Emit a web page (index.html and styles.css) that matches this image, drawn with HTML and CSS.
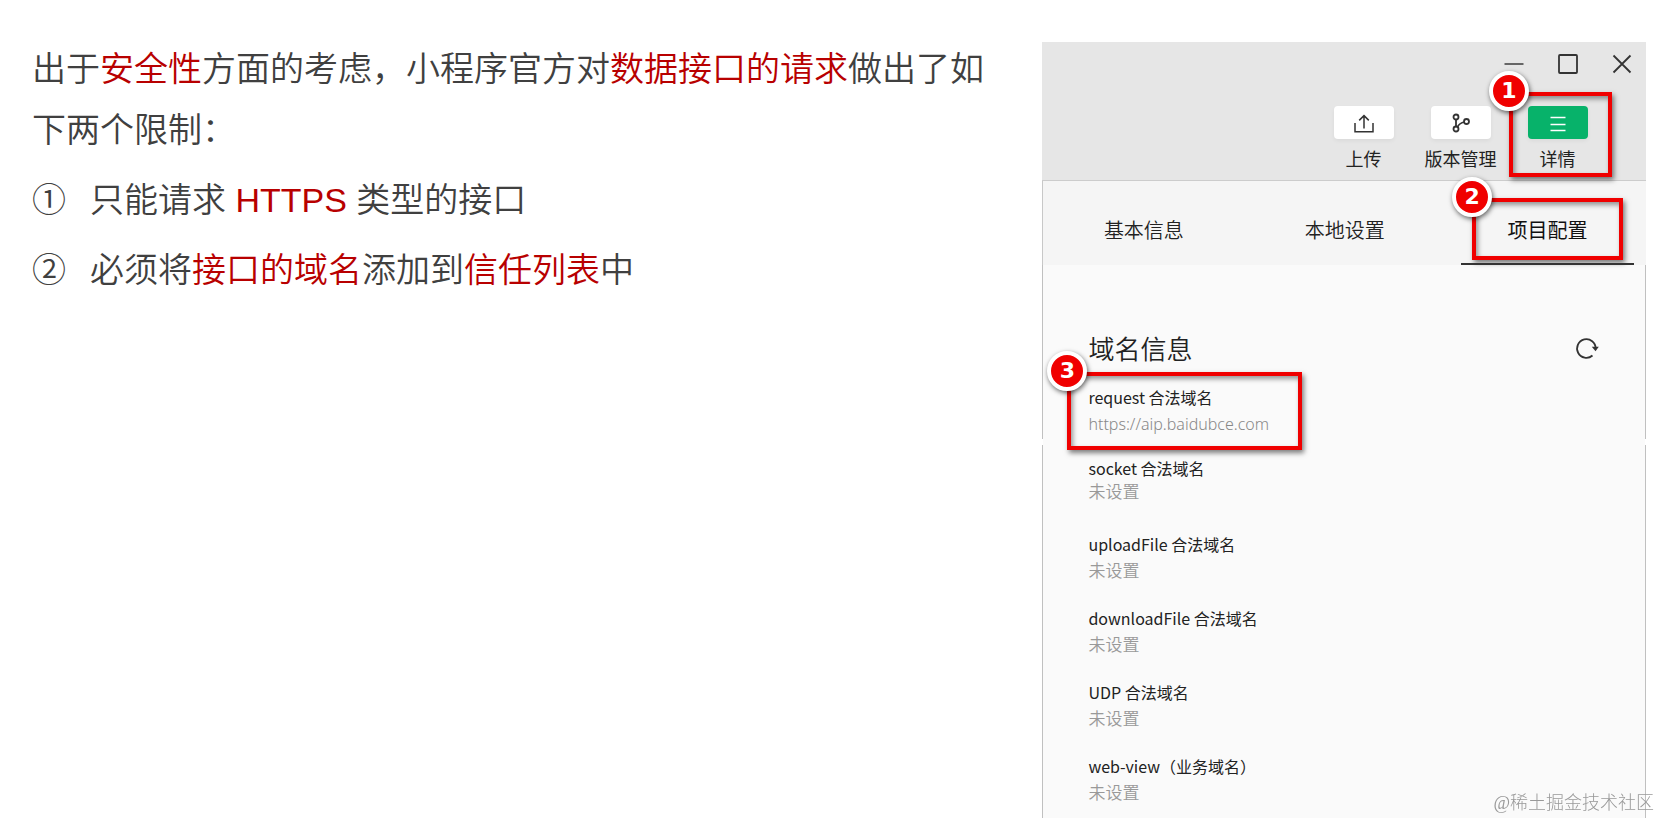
FILE: index.html
```html
<!DOCTYPE html>
<html lang="zh-CN">
  <head>
    <meta charset="UTF-8" />
    <meta name="viewport" content="width=device-width, initial-scale=1.0" />
    <title>小程序网络请求的限制</title>
    <link rel="stylesheet" href="styles.css">
  </head>
  <body>
    <div class="page">
      <main class="notes">
        <p>
          出于<em>安全性</em>方面的考虑，小程序官方对<em>数据接口的请求</em>做出了如下两个限制：
        </p>
        <ul class="limits">
          <li>
            <span class="limit-number">①</span>
            <span>只能请求 <em class="latin">HTTPS</em> 类型的接口</span>
          </li>
          <li>
            <span class="limit-number">②</span>
            <span>必须将<em>接口的域名</em>添加到<em>信任列表</em>中</span>
          </li>
        </ul>
      </main>

      <section class="panel">
        <header class="panel-header">
          <div class="window-buttons">
            <button class="window-button" aria-label="最小化">
              <svg width="20" height="20" viewBox="0 0 20 20">
                <path d="M0.5 10h19" stroke="#666" stroke-width="2" />
              </svg>
            </button>
            <button class="window-button" aria-label="最大化">
              <svg width="20" height="20" viewBox="0 0 20 20">
                <rect x="1" y="1" width="18" height="18" rx="1" stroke-width="1.8" />
              </svg>
            </button>
            <button class="window-button" aria-label="关闭">
              <svg width="20" height="20" viewBox="0 0 20 20">
                <path d="M1.5 1.5l17 17M18.5 1.5l-17 17" stroke-width="1.8" />
              </svg>
            </button>
          </div>
          <div class="tools">
            <button class="tool">
              <span class="tool-icon">
                <svg width="20" height="20" viewBox="0 0 20 20">
                  <path d="M1 10v8.700h18V10M10 15.500V3M5.2 7.400L10 2.600l4.8 4.8" stroke-width="1.5" />
                </svg>
              </span>
              <span>上传</span>
            </button>
            <button class="tool">
              <span class="tool-icon">
                <svg width="20" height="20" viewBox="0 0 20 20">
                  <g stroke-width="1.8">
                    <circle cx="5" cy="4" r="2.5" />
                    <circle cx="5" cy="16" r="2.5" />
                    <circle cx="15.5" cy="8.500" r="2.5" />
                    <path d="M5 6.500v7M6.500 14q1.500-3.500 6.500-5" />
                  </g>
                </svg>
              </span>
              <span>版本管理</span>
            </button>
            <button class="tool tool-active">
              <span class="tool-icon">
                <svg width="20" height="20" viewBox="0 0 20 20">
                  <path d="M2.5 4.500h15M2.5 11.500h15M2.5 17.500h15" stroke-width="1.5" />
                </svg>
              </span>
              <span>详情</span>
              <span class="callout"><span class="badge">1</span></span>
            </button>
          </div>
        </header>

        <nav class="tabs">
          <button class="tab">基本信息</button>
          <button class="tab">本地设置</button>
          <button class="tab tab-active">
            项目配置
            <span class="callout"><span class="badge">2</span></span>
          </button>
        </nav>

        <div class="panel-body">
          <div class="domain-heading">
            <h2>域名信息</h2>
            <button class="refresh" aria-label="刷新">
              <svg width="24" height="24" viewBox="0 0 24 24">
                <path d="M17.5 19.5a9.3 9.3 0 1 1 3.2-7" stroke-width="1.8" />
                <path class="arrow" d="M16.8 10.8h7l-3.3 4.4z" />
              </svg>
            </button>
          </div>
          <dl class="domains">
            <div class="domain domain-allowed">
              <dt>request 合法域名</dt>
              <dd class="url">https://aip.baidubce.com</dd>
              <span class="callout"><span class="badge">3</span></span>
            </div>
            <div class="domain domain-tight">
              <dt>socket 合法域名</dt>
              <dd>未设置</dd>
            </div>
            <div class="domain">
              <dt>uploadFile 合法域名</dt>
              <dd>未设置</dd>
            </div>
            <div class="domain">
              <dt>downloadFile 合法域名</dt>
              <dd>未设置</dd>
            </div>
            <div class="domain">
              <dt>UDP 合法域名</dt>
              <dd>未设置</dd>
            </div>
            <div class="domain">
              <dt>web-view（业务域名）</dt>
              <dd>未设置</dd>
            </div>
          </dl>
        </div>
      </section>
    </div>
    <div class="watermark">@稀土掘金技术社区</div>
  </body>
</html>
```

FILE: styles.css
```css
* {
  box-sizing: border-box;
}
body {
  margin: 0;
  background-color: #fff;
  color: #404040;
  font-family: "Noto Sans CJK SC", sans-serif;
}
button {
  border: none;
  padding: 0;
  background: none;
  color: inherit;
  font-family: inherit;
  cursor: pointer;
}
svg {
  display: block;
  fill: none;
  stroke: #333;
}
.page {
  display: grid;
  grid-template-columns: 19fr 11fr;
  min-height: 100vh;
  padding: 42px 14px 0 0;
}

/* Left side notes */
.notes {
  padding: 0 38px 0 32px;
  font-family: "Liberation Sans", "Noto Sans CJK SC", sans-serif;
  font-size: 34px;
  font-weight: 350;
  line-height: 61px;
}
.notes p {
  margin: -3px 0 9px;
}
.notes em {
  font-style: normal;
  color: #b80000;
}
.notes .latin {
  font-weight: 400;
}
.limits {
  list-style: none;
  margin: 0;
  padding: 0;
}
.limits li {
  display: flex;
  margin-bottom: 9px;
}
.limit-number {
  width: 58px;
}

/* Details panel */
.panel {
  display: flex;
  flex-direction: column;
  color: #222;
}
.panel-header {
  padding-bottom: 10px;
  background-color: #e6e6e6;
  border-bottom: 1px solid #ccc;
}
.window-buttons {
  display: flex;
  justify-content: flex-end;
  gap: 6px;
}
.window-button {
  display: flex;
  align-items: center;
  justify-content: center;
  width: 48px;
  height: 44px;
}
.tools {
  display: flex;
  justify-content: flex-end;
  padding: 20px 40px 0 0;
}
.tool {
  position: relative;
  display: flex;
  flex-direction: column;
  align-items: center;
  gap: 7px;
  width: 97px;
  font-size: 18px;
  line-height: 24px;
}
.tool-icon {
  display: flex;
  align-items: center;
  justify-content: center;
  width: 60px;
  height: 33px;
  border-radius: 4px;
  background-color: #fff;
  box-shadow: 0 2px 4px rgba(0, 0, 0, 0.05);
}
.tool-active .tool-icon {
  background-color: #07b26a;
}
.tool-active svg {
  stroke: #fff;
}

.tabs {
  display: grid;
  grid-template-columns: repeat(3, 1fr);
  height: 84px;
  background-color: #f5f5f5;
  border-left: 1px solid #c8c8c8;
}
.tab {
  position: relative;
  padding-top: 14px;
  font-size: 20px;
  font-weight: 350;
  line-height: 28px;
}
.tab-active {
  padding-left: 4px;
  font-weight: 400;
  color: #111;
}
.tab-active::after {
  content: "";
  position: absolute;
  bottom: 0;
  left: 16px;
  right: 12px;
  height: 2px;
  background-color: #333;
}

.panel-body {
  flex: 1;
  padding: 67px 46px 0 45px;
  background-color: #fafafa;
  border: solid #c0c0c0;
  border-width: 0 1px;
  /* side lines with a short break */
  border-image: linear-gradient(#c0c0c0 174px, #fff 174px, #fff 180px, #c0c0c0 180px) 1;
}
.domain-heading {
  display: flex;
  align-items: center;
  justify-content: space-between;
  margin-bottom: 21px;
}
.domain-heading h2 {
  margin: 0;
  font-size: 26px;
  font-weight: 350;
  line-height: 32px;
}
.refresh .arrow {
  fill: #333;
  stroke: none;
}
.domains {
  margin: 0;
  font-size: 16px;
  line-height: 25px;
}
.domain {
  position: relative;
  width: fit-content;
  margin-bottom: 24px;
}
.domain dd {
  margin: 0;
  color: #999;
  font-size: 17px;
  font-weight: 350;
}
.domain .url {
  color: #888;
  font-family: "Noto Sans", sans-serif;
  font-size: 16px;
  line-height: 28px;
}
.domain-allowed {
  margin-bottom: 18px;
}
.domain-tight {
  margin-bottom: 31px;
}
.domain-tight dd {
  line-height: 20px;
}

/* Red frames with numbered badges */
.callout {
  position: absolute;
  border: 4px solid #f00000;
  box-shadow: 2px 3px 5px rgba(0, 0, 0, 0.5), inset 2px 3px 5px rgba(0, 0, 0, 0.4);
}
.tool .callout {
  inset: -14px -6px -7px 0;
}
.tab .callout {
  inset: 17px 23px 5px 27px;
}
.domain .callout {
  inset: -13px -33px -12px -21px;
}
.badge {
  position: absolute;
  top: -25px;
  left: -24px;
  width: 40px;
  height: 40px;
  border: 4px solid #fff;
  border-radius: 50%;
  background-color: #f00000;
  box-shadow: 1px 2px 5px rgba(0, 0, 0, 0.6);
  color: #fff;
  font-family: "DejaVu Sans", sans-serif;
  font-size: 22px;
  font-weight: bold;
  line-height: 32px;
  text-align: center;
}

.watermark {
  position: fixed;
  right: 6px;
  bottom: 3px;
  color: #999;
  font-family: "Liberation Serif", "Noto Sans CJK SC", serif;
  font-size: 18px;
  font-weight: 300;
  line-height: 24px;
}
```
